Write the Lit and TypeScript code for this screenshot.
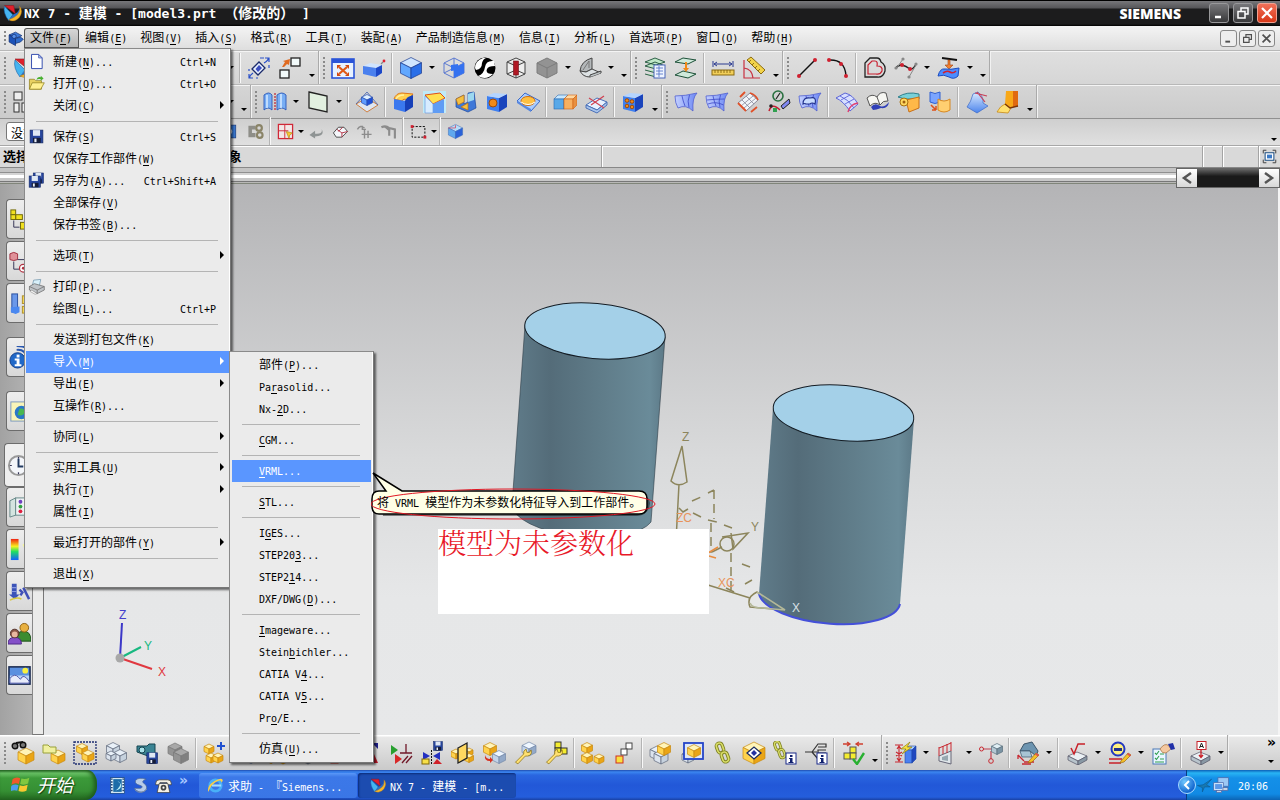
import { LitElement, html, css, nothing } from "lit";
import { customElement } from "lit/decorators.js";
import { unsafeSVG } from "lit/directives/unsafe-svg.js";

/* ---------- small drawing helpers (24 x 24 grid) ---------- */
const p = (d: string, fill = "none", stroke = "none", w = 1, extra = "") =>
  `<path d="${d}" fill="${fill}" stroke="${stroke}" stroke-width="${w}" ${extra}/>`;
const c = (x: number, y: number, r: number, fill = "none", stroke = "none", w = 1) =>
  `<circle cx="${x}" cy="${y}" r="${r}" fill="${fill}" stroke="${stroke}" stroke-width="${w}"/>`;
const r = (x: number, y: number, w: number, h: number, fill = "none", stroke = "none", sw = 1) =>
  `<rect x="${x}" y="${y}" width="${w}" height="${h}" fill="${fill}" stroke="${stroke}" stroke-width="${sw}"/>`;

const BLUE = ["#dff0ff", "#5e9bff", "#1e4fd6", "#2a4fb0"];
const GOLD = ["#fff4b8", "#ffd34d", "#eaa516", "#c98a10"];
const PALE = ["#eef6ff", "#c3d4ea", "#93a9c8", "#7488a8"];
const GREY = ["#a8a8a8", "#949494", "#808080", "#787878"];
const GLASS = ["#e8f0f8", "#dce4ee", "#c6d2de", "#5b6678"];

const iso = (x: number, y: number, s: number, k: string[]) => {
  const h = s / 2;
  return (
    p(`M${x} ${y - s}L${x + s} ${y - h}L${x} ${y}L${x - s} ${y - h}Z`, k[0], k[3], 0.7) +
    p(`M${x - s} ${y - h}L${x} ${y}V${y + s}L${x - s} ${y + h}Z`, k[1], k[3], 0.7) +
    p(`M${x + s} ${y - h}L${x} ${y}V${y + s}L${x + s} ${y + h}Z`, k[2], k[3], 0.7)
  );
};
const box = (x: number, y: number, w: number, h: number, d: number, k: string[]) =>
  p(`M${x} ${y}l${d} ${-d}h${w}l${-d} ${d}Z`, k[0], k[3], 0.6) +
  r(x, y, w, h, k[1], k[3], 0.6) +
  p(`M${x + w} ${y}l${d} ${-d}v${h}l${-d} ${d}Z`, k[2], k[3], 0.6);
const slab = (y: number, k: string[]) =>
  p(`M3 ${y}L12 ${y - 4}L22 ${y}L13 ${y + 5}Z`, k[0], k[3], 0.7) +
  p(`M3 ${y}L13 ${y + 5}V${y + 9}L3 ${y + 4}Z`, k[1], k[3], 0.7) +
  p(`M22 ${y}L13 ${y + 5}V${y + 9}L22 ${y + 4}Z`, k[2], k[3], 0.7);
const sheet = (grid: boolean) =>
  p("M1 6Q11 6 23 3Q18 8 19 21Q12 14 4 18Q1 13 1 6Z", "url(#sheet)", "#5060d0", 0.8) +
  p("M8 6Q9 11 11 16M15.500 5Q13 11 15 17.500", "none", "#3b48c8", 0.8) +
  (grid ? p("M2 10Q11 9 19.500 9M3 14Q11 11 18.500 15", "none", "#3b48c8", 0.8) : "");
const pencil = p("M13 20L20 12L23 14L16 21L12 22Z", "#f5c028", "#9a6a10", 0.7) + p("M20 12L23 14L22 15.500L19 13.500Z", "#e05050");
const wrench =
  p("M3 21L13 11Q12 7 16 5L17 9L20 9L22 6Q24 12 18 13.500L15 13.500L6 23Z", "#ffe070", "#8a7010", 0.9);
const info = (x: number, y: number) =>
  r(x, y, 10, 11, "#fff", "#1a2a8a", 1) + r(x + 4, y + 2, 2.5, 2, "#10206e") + p(`M${x + 3} ${y + 5}h3.500v4h1v1h-5v-1h1.500v-3h-1z`, "#10206e");
const ring = (x: number, y: number) =>
  `<g transform="rotate(-20 ${x} ${y})"><rect x="${x - 3}" y="${y - 5}" width="6" height="10" rx="3" fill="none" stroke="#7d8020" stroke-width="3.400"/><rect x="${x - 3}" y="${y - 5}" width="6" height="10" rx="3" fill="none" stroke="#d8dc68" stroke-width="1.600"/></g>`;
const link = ring(9, 7) + ring(14, 16);
const floppy =
  r(3, 3, 18, 18, "#27459c", "#152a68") + r(7, 3, 10, 8, "#dfe8f4") + r(7, 14, 11, 7, "#141c38") + r(9, 15, 3, 5, "#e8eef8");

const ICONS: Record<string, string> = {
  nx:
    p("M3 3L14 3L16 13Z", "#e0202c", "#8c1018", 0.6) +
    p("M3 4L13 14L8 21Q1 12 3 4Z", "#45b4f0", "#1760a8", 0.6) +
    p("M13 14Q20 12 21 6Q25 17 8 21Z", "#2e6fc4") +
    p("M21 4Q24 15 8 20Q15 24 21 17Q26 9 21 4Z", "#f6b62a", "#b87810", 0.5),
  part:
    p("M3 7L12 3L21 8L14 11Z", "#3f7ad8", "#0e2c70") +
    p("M3 7V17L12 22V12Z", "#1c52b8", "#0e2c70") +
    p("M12 12L19 10L23 13L19 17L12 19Z", "#2f6ccc", "#0e2c70") + c(10, 9, 3, "#5a90e8", "#0e2c70"),
  grid4: r(2, 2, 8, 8, "#eee", "#333") + r(2, 13, 5, 9, "#eee", "#333") + r(10, 13, 8, 9, "#eee", "#333") + r(14, 2, 7, 8, "#eee", "#333"),
  rotate:
    p("M5 13L12 6L18 12L11 19Z", "#e8f0ff", "#1a2a6a", 1.3) + p("M8.500 13L12 9L15 12L11 16Z", "#3c4fc0") +
    p("M18 2H22V6M21 2Q22 4 17 7M13 2L17 2M22 9V12", "none", "#2a50c8", 1.2) + p("M6 22H2V18M3 22Q2 20 6 17M2 13V15M9 22h2", "none", "#2a50c8", 1.2),
  replace: r(13, 2, 9, 8, "#f2fafa", "#222", 1.3) + r(2, 14, 9, 8, "#f2fafa", "#222", 1.3) + p("M4 11L7 6L5 5L12 3L11 9L9 8L6 11Z", "#e06a20"),
  fit:
    r(1, 3, 22, 19, "#e8f2ff", "#2a54d8", 1.6) + r(1, 3, 22, 4, "#2a54d8") +
    p("M8 11L16 18M16 11L8 18", "none", "#e05a18", 2.2) + p("M6 9h4l-4 4zM18 9v4l-4-4zM6 20v-4l4 4zM18 20h-4l4-4z", "#d24a10"),
  view: p("M1 10L8 7L20 9L14 12Z", "#cfe4ff") + p("M1 10L14 12V21L1 18Z", "#4a80ee") + p("M14 12L20 9V17L14 21Z", "#1c48c8") + p("M19 8l2-2", "none", "#888", 1.2) + c(22, 5, 1.4, "#e02030"),
  cube: iso(12, 12, 10.5, ["#cfe6ff", "#62a8ff", "#2a6fe8", "#1b3a8c"]),
  cubeEdge: p("M2 7L12 2L22 7V17L12 22L2 17ZM2 7L12 12L22 7M12 12V22M12 2V12L2 17", "none", "#5b78d0", 1) + p("M12 12L22 7V17L12 22Z", "#3572f0") + p("M9 9L16 8V14L9 15Z", "#3572f0"),
  half:
    c(12, 12, 10.5, "#000") + p("M21 5Q13 4 12 11Q11 18 5 20Q13 25 20 18Q12 18 14 13Q15 10 22 10Z", "#fff") + p("M3 14Q9 13 9 7Q10 3 13 2L10 2Q2 5 2 12Z", "#fff"),
  redCore: p("M3 6L12 2L21 6V18L12 22L3 18ZM3 6L12 10L21 6M12 10V22M3 18L12 14L21 18", "#eee", "#444", 1) + r(9.5, 5, 5, 14, "#b01824", "#701018", 0.6),
  greyCube: p("M2 7L12 2L22 7V17L12 22L2 17Z", "#939393", "#7c7c7c") + p("M2 7L12 12L22 7M12 12V22", "none", "#7c7c7c"),
  section: p("M2 15Q3 5 14 2V13L8 16Z", "#b4b8ba", "#444") + p("M8 16L14 13L23 17L12 21Q5 21 2 15Z", "#dde2e4", "#444") + p("M12 21V19L23 15V17", "#c0c6c8", "#444") + p("M5 14L11 5V12", "none", "#777"),
  layers:
    p("M2 6L12 2L22 6L13 9ZM2 10L12 6L22 10L13 13ZM2 14L13 17L22 14M2 18L13 21L20 18", "#bfe8c8", "#1c5038", 0.9) +
    r(11, 9, 11, 13, "#eef4ff", "#4a66b8") + p("M13 12h7M13 15h7M13 18h7M16 10v11", "none", "#5a78c8", 0.9),
  layer2: p("M1 6L9 2L22 4L14 8ZM1 19L9 15L22 18L14 22Z", "#cfeadb", "#1c5038") + p("M11 6h2v6h2l-3 4l-3-4h2z", "#f08a18"),
  ruler: p("M2 5V11M22 5V11M3 8H21M6 6L3 8L6 10M18 6L21 8L18 10", "none", "#2a3a90", 1) + r(1, 14, 22, 5, "#f2cf5a", "#8a6a10") + p("M4 14v3M7 14v3M10 14v3M13 14v3M16 14v3M19 14v3", "none", "#7a5a08", 0.8),
  angle: p("M2 4V22H18M2 12Q10 13 11 22", "none", "#c83040", 1.2) + p("M5 4L9 1L23 14L19 18Z", "#f2d34a", "#8a6a10") + p("M9 4l-2 2M12 7l-2 2M15 10l-2 2M18 13l-2 2", "none", "#7a5a08", 0.8),
  line: p("M4 20L20 4", "none", "#111", 1.4) + c(4, 20, 2, "#d02030") + c(20, 4, 2, "#d02030"),
  arc: p("M3 4Q19 3 20 20", "none", "#111", 1.4) + c(3, 4, 2, "#d02030") + c(15, 8, 2, "#d02030") + c(20, 20, 2, "#d02030"),
  offset:
    p("M2 21V7L7 2H14Q17 2 18 6Q23 9 22 15Q20 22 14 21Z", "none", "#222", 1.3) + p("M5 18V9L9 5H12Q15 5 14 10Q20 10 19 15Q17 19 13 18Z", "none", "#c82030", 1.2),
  spline: p("M2 12Q4 9 8 9Q12 10 16 13Q19 14 22 8", "none", "#222", 1.3) + p("M9 3L2 13M22 9L15 21", "none", "#888", 1) + c(8, 9, 2, "#d02030") + c(16, 13, 2, "#d02030") + c(9, 3, 1.6, "#888") + c(22, 8, 1.6, "#888") + c(2, 12, 1.6, "#888") + c(15, 21, 1.6, "#888"),
  project: p("M5 2L20 4", "none", "#111", 2) + p("M11 4h2v5h3l-4 4l-4-4h3z", "#f08030", "#a04010", 0.6) + p("M1 20Q3 12 8 13T22 12L21 20Q17 24 12 21T1 20Z", "#4b8cff", "#1c4cc0") + p("M6 17Q10 14 13 16T19 15", "none", "#d02030", 1.6),
  sketch: p("M1 5Q6 1 9 5V20Q5 16 1 20ZM14 5Q19 1 23 5V20Q19 16 14 20Z", "#78aef4", "#2a58b8", 0.9) + p("M12 3V21", "none", "#c02030", 1.2, 'stroke-dasharray="2 1"') + p("M4 5V18M18 4V18", "none", "#d8ecff", 1.5),
  datum: p("M3 2L21 6V22L3 18Z", "#e2f0e0", "#222", 1.3),
  extrude: p("M1 14L12 8L23 15L12 22Z", "#dfe6f0", "#d08040", 1) + p("M12 2L1 14M12 2L23 15", "none", "#4060b0", 0.8) + iso(12, 10, 5.500, BLUE),
  blend: p("M2 9Q4 3 10 3L21 4L16 10Q11 8 10 11Z", "#ffd050", "#e07818") + p("M2 9L13 11V22L2 19Z", "#3a78ee") + p("M13 11Q14 7 21 5V17L13 22Z", "#1740b8") + p("M4 9Q6 5 12 5", "none", "#fff0a0", 1.3),
  chamfer: r(0, 1, 23, 22, "#bfeaf8") + p("M2 5L17 3L22 8L10 14Z", "#ffe050", "#e05018") + p("M2 6L10 14V23H2Z", "#d8ecff", "#6a9ce0", 0.7) + p("M10 14L21 9V23H10Z", "#5f9cf4"),
  shell: p("M2 9L10 5V14L14 12V3L20 2L22 18L14 22L2 17Z", "#3f78d8", "#1a48a0", 0.7) + p("M2 9L10 5V12L4 15ZM7 17L14 13V20Z", "#f5c040", "#c07010", 0.7) + p("M14 4L20 2V10L14 12Z", "#9cd8f0"),
  hole: p("M2 6L14 8V22L2 19Z", "#3f80f0") + p("M14 8L22 4V17L14 22Z", "#1a44bc") + p("M2 6L9 3L22 4L14 8Z", "#b4d4ff") + c(8, 13, 4, "#f08a18", "#a04a08"),
  boss: p("M1 11L9 3L24 11L15 21Z", "#a8ccff", "#3a68c8") + p("M1 11L15 19V22L1 13Z", "#5888e0") + `<ellipse cx="12" cy="11" rx="7" ry="4.500" fill="#ffc040" stroke="#d07010"/>` + p("M5 12Q12 17 19 12", "none", "#fff", 1),
  trim: box(1, 9, 10, 10, 4, ["#c8e8ff", "#58a8e8", "#3a78c8", "#2a68b0"]) + box(11, 9, 9, 10, 4, ["#ffd8a0", "#f8b060", "#e89040", "#d06010"]),
  cut: p("M2 15L13 8L23 12L13 20Z", "#e8f2ff", "#4a70b8") + p("M2 15V18L13 23L23 15V12L13 20Z", "#a8c4ec", "#4a70b8") + p("M5 8L20 18", "none", "#d04050", 1.2) + p("M20 6L7 15", "none", "#d04050", 1.2),
  pattern: p("M2 6L14 8V22L2 19Z", "#3f80f0") + p("M14 8L22 4V17L14 22Z", "#1a44bc") + p("M2 6L9 3L22 4L14 8Z", "#b4d4ff") + c(6, 10.5, 1.8, "#f08a18", "#a04a08") + c(11, 11.500, 1.8, "#f08a18", "#a04a08") + c(6, 16, 1.8, "#f08a18", "#a04a08") + c(11, 17, 1.8, "#f08a18", "#a04a08"),
  sheetA: sheet(false),
  sheetB: sheet(true),
  sheetRed: p("M2 13L14 3L22 10L10 21Z", "#f2f6fa", "#889") + p("M6 10l8 8M10 6l8 8M5 16L17 6M8 18L20 8", "none", "#889", 0.8) + p("M2 13Q6 17 10 21M14 3Q20 5 22 10M4 7L9 2M15 22L21 17", "none", "#e05028", 1.8),
  sweep: c(11, 6, 5, "none", "#2a7040", 1.6) + p("M13 3L9 9", "none", "#222", 1.2) + p("M2 21Q5 12 13 20", "none", "#c02030", 1.5) + p("M14 16L22 9L23 13L16 19Z", "#8088f0", "#222") + r(6, 18, 4, 4, "#30a050") + c(4, 16, 1.8, "#222"),
  sheetC: sheet(false) + p("M5 14Q5 7 12 8Q19 6 17 14Q14 12 12 14L8 14Q7 13 5 14Z", "#c8dcff", "#20308c", 1.1),
  mesh: p("M1 8L10 3Q18 5 23 14L15 21Q8 11 1 8Z", "#d8e0ff", "#5b64d8") + p("M5 6Q13 9 19 18M6 10L15 5M10 14L19 9M4 8", "none", "#5b64d8", 0.9) + p("M13 22Q15 14 23 13", "none", "#e04070", 1.4),
  book: p("M1 8Q6 3 11 7Q14 1 20 3L22 11Q17 10 14 15Q9 11 4 16Z", "#f6f6f2", "#555") + p("M11 7L14 15", "none", "#555") + p("M5 17Q9 12 14 16Q18 18 23 12Q22 19 15 18Q10 20 7 20Z", "#3040b8"),
  roll: p("M1 7Q10 1 22 4V9L8 9Z", "#78d0d8", "#30808c") + p("M9 10L22 7V18L12 22Z", "#ffb848", "#c87018") + c(7, 12, 4, "#ffd860", "#a87010") + c(7, 12, 1.5, "#a06010"),
  transform: p("M2 2Q7 5 12 2V12Q7 15 2 12Z", "#7aa4ff", "#3060d0") + p("M10 9Q16 13 22 9V20Q16 24 10 20Z", "#ffcf70", "#d88820") + p("M3 15L8 20M8 20V16M8 20H4", "none", "#e05018", 1.5),
  blueFin: p("M2 17Q6 12 8 4L13 2Q19 7 18 13L23 16L12 23Z", "url(#fin)", "#3a68c8", 0.7) + p("M10 3L22 6M12 2L20 12", "none", "#c84058", 1.2),
  orange: p("M10 1H22V16L14 18L9 14Z", "#f8a818") + p("M17 1H22V16L17 17Z", "#e06a10") + p("M1 22Q4 16 9 14L15 18L12 23Z", "#ffe070", "#c88a18", 0.8) + p("M9 14L14 18L22 16", "none", "#7a3408", 1.3),
  lock: r(2, 3, 16, 18, "#3a78d0", "#1a3c80") + c(9, 12, 4, "#e8f0ff"),
  asm: p("M2 4V20H12V14H7V9H12V4Z", "#8e8e88") + c(17, 7, 4, "none", "#8a8468", 3) + c(18, 17, 4, "none", "#8a8468", 3),
  snap: r(2, 2, 20, 20, "#f2e8e8", "#d02838", 1.8) + p("M2 11H16M11 2V22", "none", "#d02838", 1.3) + p("M13 12L22 14L18 17L17 22Z", "#f8c830", "#a07810", 0.8),
  undo: p("M19 8Q22 16 10 15V11L2 17L10 22V19Q25 18 19 8Z", "#8f9494"),
  wcs: p("M2 14L9 6H17L22 12L14 20H6Z", "#f4f6fa", "#444", 1.3) + p("M7 9L14 14V20M14 14L22 12M9 12L15 6", "none", "#b03040", 1.3),
  ghostA: p("M2 9Q6 2 12 7M12 10V22M8 16H22M17 11V21M9 4v5h5", "none", "#8c8c8c", 2),
  ghostB: p("M2 6Q8 3 13 7L21 9V22M13 10V18M7 5l7 6", "none", "#8c8c8c", 3),
  rect: p("M3 5H21V20H3Z", "none", "#111", 1.4, 'stroke-dasharray="3 2"') + r(1, 3, 4, 4, "#d02030") + r(19, 18, 4, 4, "#d02030"),
  blueBox: iso(12, 12, 10, ["#b8dcf8", "#5fa8ee", "#2b62d8", "#3a68b8"]) + p("M2 7h10v-4", "none", "#d04860", 1.1),
  full: p("M2 7V2H7M17 2H22V7M22 17V22H17M7 22H2V17", "none", "#444", 1.600) + r(5, 6, 14, 12, "#fff", "#1a4c80", 1.6) + r(8, 9, 8, 6, "#3a7ac8"),
  newFile: p("M5 2H15L20 7V22H5Z", "#fff", "#3850b0", 1.4) + p("M15 2V7H20Z", "#b8c8f0", "#3850b0"),
  open: p("M2 6H9L11 8H19V20H2Z", "#e8d060", "#8a7a18") + p("M2 20L6 11H23L18 20Z", "#fff090", "#8a7a18") + p("M12 7Q13 2 18 3V1L22 5L18 8V6Q14 5 12 7Z", "#48b030"),
  save: floppy,
  saveAs: `<g transform="translate(5 -1) scale(.8)">${floppy}</g><g transform="translate(-1 3) scale(.88)">${floppy}</g>`,
  print: p("M8 3L18 2L16 11H6Z", "#d8f0fa", "#6a90a8") + p("M2 12L9 8L23 12V17L13 22L2 17Z", "#c0c4c8", "#666") + p("M2 12L13 17L23 12M13 17V22", "none", "#666") + p("M3 19l7 4l3-1l-8-5z", "#f8f8f8", "#777", 0.7),
  find: iso(15, 15, 8, GOLD) + c(4, 5, 2.800, "#777", "#111", 1.4) + c(12, 4, 2.800, "#777", "#111", 1.4) + p("M5 2L12 1", "none", "#111", 2),
  openComp: iso(16, 16, 7, GOLD) + p("M1 4H6L8 6H14V12H1Z", "#f0f0a0", "#98a038"),
  selComp: p("M1 1H23V23H1Z", "none", "#1c2c70", 1.3, 'stroke-dasharray="2 1"') + iso(9, 8, 5.5, GOLD) + iso(15, 15, 6, GOLD),
  wire: iso(9, 8, 6.5, GLASS) + iso(16, 15, 6.5, GLASS) + iso(7, 15, 5, GLASS),
  camera: p("M2 5H12L14 3H20V12L13 15L2 11Z", "#3a8494", "#144450") + c(7, 9, 3, "#a8e0e8", "#144450") + `<g transform="translate(10 10) scale(.6)">${floppy}</g>`,
  ghost: iso(9, 9, 7, GREY) + iso(15, 15, 7.5, GREY),
  addComp: iso(6, 8, 5, GOLD) + iso(8, 17, 5, GOLD) + iso(15, 17, 5, GOLD) + p("M18 1V9M14 5H22", "none", "#2050d0", 2),
  corner: p("M3 22L20 22L12 4Z", "#c01828") + p("M14 2L20 8V2Z", "#20208c"),
  mate: p("M2 4L9 9L2 14Z", "#28a030") + p("M6 13L13 18L6 23Z", "#d82828") + p("M17 3V12M11 12H23M13 22L19 15M17 22L23 15", "none", "#701828", 1.3),
  mirror: p("M3 11L10 15L3 19ZM20 11L13 15L20 19Z", "#2430c0") + p("M11.500 9V23", "none", "#111", 1, 'stroke-dasharray="2 1"') + r(2, 18, 7, 5, "#f8e048", "#806808") + p("M13 23h9l-5-5z", "#d02028") + `<g transform="translate(12 -1) scale(.5)">${floppy}</g>`,
  mirrorAsm: iso(5, 13, 5, GOLD) + iso(18, 11, 4, GOLD) + iso(18, 17, 4.500, GOLD) + p("M7 7L16 2V17L7 22Z", "#ffd860", "#222", 1.3),
  move: iso(8, 8, 6.5, GOLD) + iso(17, 16, 6.500, PALE) + p("M3 14Q4 18 8 18V16L11 19L8 22V20Q2 20 3 14Z", "#d83020"),
  wrenchA: iso(16, 8, 7, PALE) + `<g transform="translate(0 4) scale(.82)">${wrench}</g>`,
  wrenchB: r(11, 1, 6, 6, "#f4ec30", "#333") + r(11, 7, 6, 6, "#f4ec30", "#333") + r(17, 7, 6, 6, "#f4ec30", "#333") + `<g transform="translate(0 4) scale(.82)">${wrench}</g>`,
  explode: iso(6, 7, 5.5, GOLD) + iso(6, 17, 5.5, GOLD) + iso(18, 18, 5, GOLD),
  boxes: r(14, 2, 6, 6, "#fff", "#444") + r(9, 8, 6, 6, "#fff", "#444") + r(4, 15, 7, 7, "#f8e040", "#d03020"),
  wave1: iso(8, 12, 7, GLASS) + iso(12, 16, 7, GLASS) + iso(15, 8, 6.500, GOLD),
  wave2: iso(8, 16, 6, GLASS) + r(4, 2, 19, 16, "#dfe8f4", "#2444c8", 1.8) + iso(14, 10, 6.500, GOLD),
  link,
  diamond: iso(12, 12, 11, GOLD) + p("M5 12L12 6L19 12L12 18Z", "#fff", "#1c2c60", 1.3) + p("M9 12L12 9L15 12L12 15Z", "#2430a0"),
  linkInfo: `<g transform="translate(-3 -1) scale(.85)">${link}</g>` + info(13, 12),
  treeInfo: p("M1 11H8M8 11L14 3H22V6H14M8 11H13M22 9H14V12H22M8 11L14 18", "none", "#333", 1.2) + info(13, 12),
  check: p("M2 3H9M6 1L9 3L6 5M22 3H15M18 1L15 3L18 5", "none", "#d04030", 1.3) + r(9, 6, 6, 6, "#f4ec30", "#555") + r(9, 12, 6, 6, "#f4ec30", "#555") + r(3, 12, 6, 6, "#f4ec30", "#555") + p("M12 18L16 23L23 12", "none", "#28b030", 2.4),
  dimA: p("M2 4H10M2 21H10M6 5V20M4 8L6 5L8 8M4 17L6 20L8 17M3 11L9 15M9 11L3 15", "none", "#c82830", 1.1) + box(12, 9, 7, 13, 4, ["#a8ccff", "#4a80f0", "#2048c0", "#2048a8"]) + p("M17 1L8 8H13L9 13L19 6H14Z", "#f4e040", "#908010", 0.7),
  dimB: p("M3 15L15 10V23L3 20Z", "#e0e6ea", "#667") + p("M3 15V6M7 13V5M11 12V3M15 10V1M3 7L15 2", "none", "#c82830", 1) + p("M6 16L12 14V20L6 19Z", "#98a8b0"),
  dimC: p("M4 8H14M12 10V18", "none", "#c04050", 1.2) + c(2.5, 8, 2, "none", "#c82830") + c(12, 20, 2.300, "none", "#c82830") + iso(18, 8, 5.500, ["#e0eef4", "#b4c8d4", "#7a94a4", "#566c7a"]),
  sketchEdit: p("M4 10L8 3L16 1L22 10L20 15L14 10Z", "#6c94b0", "#3c5468") + p("M4 10L14 10L16 16H6Z", "#a8c4d4", "#3c5468", 0.7) + p("M2 14L8 20M2 14V18M8 21H18M6 23H15", "none", "#c82830", 1.3) + pencil,
  finish: slab(15, ["#eaf0f4", "#b8c4cc", "#8898a4", "#556"]) + p("M6 7L9 13L13 3H20", "none", "#c82028", 1.5),
  symbol: c(10, 8, 6.500, "#fff080", "#2438c0", 2) + r(6, 7, 8, 3, "#20308c") + p("M1 18H14M1 22H13", "none", "#c82028", 1.6) + pencil,
  notes: r(2, 8, 13, 15, "#eaf6ff", "#4a78b8") + p("M4 12l1.500 1.500L8 10M4 17l1.500 1.500L8 15M9 13h4M9 18h4M4 21h9", "none", "#30a050", 1.1) + p("M9 8Q14 1 18 5L20 8L15 12Q11 13 9 8Z", "#f4c8a0", "#a07040", 0.7) + p("M17 3L22 2L24 8L20 9Z", "#2030a8"),
  tagA: slab(15, ["#eaf0f4", "#b8c4cc", "#8898a4", "#556"]) + r(9, 0.5, 9, 8, "#fff", "#c82028", 1) + p("M11.500 7L13.500 2L15.500 7M12 5.500H15", "none", "#222", 1) + p("M13 9V16M11 14L13 16.500L15 14", "none", "#c82028", 1.3),
  /* resource bar */
  navA: r(3, 2, 5, 5, "#f0e020", "#706808") + r(8, 7, 7, 5, "#f0e020", "#706808") + r(3, 7, 5, 5, "#f0e020", "#706808") + r(13, 15, 7, 7, "#f0e020", "#706808") + p("M6 13V20H12", "none", "#335"),
  navB: p("M2 4Q6 1 10 4V10Q6 12 2 10Z", "#e09098", "#a03040") + p("M10 10H22M6 12V20H12", "none", "#335") + c(16, 19, 4, "#fff", "#b03040", 1.3) + c(16, 19, 1.5, "#b03040"),
  navC: r(4, 2, 6, 19, "#6a98ea", "#2a50a0") + p("M3 16L12 15V21L8 23L3 21Z", "#4a88f0") + r(15, 4, 8, 8, "#f4d858", "#b09028") + r(15, 15, 8, 7, "#f4d858", "#b09028"),
  navInfo: c(10, 15, 8, "#2068c8", "#103c88") + r(9, 9, 3, 3, "#fff") + p("M7 13h5v6h2v2H7v-2h2v-4H7z", "#fff") + p("M9 4Q18 3 20 13M9 0Q23 0 24 11", "none", "#2a58b0", 2),
  navWeb: r(3, 2, 18, 20, "#f8f4b8", "#7a98c0") + c(14, 13, 7, "#2a78c8") + p("M12 9Q17 8 18 13Q14 18 10 15Z", "#48b850"),
  navClock: c(12, 12, 10, "#f4f6fa", "#999", 2) + p("M12 5V13H17", "none", "#223a60", 2) + p("M12 3v2M12 19v2M3 12h2M19 12h2", "none", "#335", 1.3),
  navRoles: p("M2 5L8 2V20L2 22Z", "#d4e4e0", "#688") + r(8, 2, 14, 18, "#eef2f4", "#688") + c(13, 6, 2, "#7040c0") + c(13, 11, 2, "#30a040") + c(13, 16, 2, "#e02040"),
  navColor: r(3, 1, 8, 22, "url(#rainbow)") + p("M15 7L22 2V20Z", "#f4f4a0"),
  navTool: p("M4 4H9V15H12L7 20L1 15H4Z", "#3c54b8") + p("M4 8h5M4 12h5", "none", "#8898e0", 1.300) + p("M12 10L15 13L13 16M16 8L22 20", "none", "#4050b8", 2.600) + p("M2 21Q10 17 14 20", "none", "#d8c840", 1.500),
  navPeople: p("M9 20Q8 9 16 10Q24 9 24 20Z", "#3c8c30", "#1c5018") + c(17, 6, 4.500, "#e8b040", "#906010") + p("M0 23Q0 16 7 16Q14 16 14 23Z", "#8450c8", "#4c2888") + c(7, 12, 4.500, "#8c5848", "#503028") + c(7, 13, 3, "#e8b8a0"),
  navPicture: r(1, 3, 22, 18, "#5a90e0", "#1c2c50", 1.6) + p("M2 12H22V20H2Z", "#b8d4f8") + c(18, 7, 3, "#f8f040") + p("M2 20V15Q7 9 11 14L13 16Q16 9 22 18V20Z", "#e8ecfa", "#5058a8"),
  /* taskbar */
  flag: p("M2 6Q6 3 11 5L9.500 12Q5 10 .500 13Z", "#f0582c") + p("M12.500 5.500Q17 7 22 4.500L20.500 11.500Q16 14 11 12Z", "#80c840") + p("M.500 14Q5 11.500 9 13.500L7.500 20Q3 18.500 -1 21Z", "#4c9cf0") + p("M10.500 13.500Q15 15.500 20 13L18.500 20Q14 22.500 9 20.500Z", "#f8c830"),
  film: r(2, 1, 20, 22, "#dff2fa", "#0a3a78") + r(6, 3, 12, 18, "#1c6ca8") + p("M12 6Q18 8 15 13T9 19Q18 18 17 10", "#b8ecf8") + p("M4 2v20M20 2v20", "none", "#0a2c60", 2, 'stroke-dasharray="2 2"'),
  swirl: p("M20 3Q8 0 5 5Q3 10 12 12Q17 14 12 16L3 16Q10 24 18 20Q24 14 17 9Q12 6 20 3Z", "#b8cce8", "#486898") + p("M4 18Q12 26 21 17", "none", "#8090a8", 1.400),
  phone: p("M1 9Q1 4 6 4H18Q23 4 23 9V11H17V8H7V11H1Z", "#f4f0e4", "#333") + p("M6 9H18L21 22H3Z", "#f4f0e4", "#333") + c(12, 15, 4, "#444") + c(12, 15, 1.5, "#fff"),
  ie: c(12, 12, 8, "none", "#48b0f8", 4) + p("M7 12H20", "none", "#a0dcff", 3) + p("M2 21Q-1 13 10 6Q20 0 22 4Q23 6 20 8Q21 5 17 5Q6 9 2 21Z", "#f8d048"),
  tray: p("M2 12L10 11L22 3L15 11L20 14L12 14L9 21L9 15Z", "#1878b0", "#0a5890", 0.8),
  pcs: r(7, 1, 15, 12, "#9cc8f4", "#4c68a8") + r(1, 8, 14, 11, "#cfe6fc", "#4c68a8") + r(3, 10, 10, 7, "#5c98e8") + r(5, 19, 7, 3, "#c8d4e4", "#4c68a8") + r(14, 15, 7, 4, "#c8d4e4", "#4c68a8"),
};

const icon = (name: string, cls = "i24") =>
  html`<svg class=${cls} viewBox="0 0 24 24" aria-hidden="true">${unsafeSVG(ICONS[name])}</svg>`;

/* Splits a caption into full-width and half-width runs; "&" marks the mnemonic. */
const label = (s: string) =>
  (s.match(/[\x20-\x7e]+|[^\x20-\x7e]+/g) ?? []).map((run) => {
    if (!/^[\x20-\x7e]/.test(run)) return run;
    const at = run.indexOf("&");
    return at < 0
      ? html`<span class="hw">${run}</span>`
      : html`<span class="hw">${run.slice(0, at)}<u>${run[at + 1]}</u>${run.slice(at + 2)}</span>`;
  });

/* Toolbar strings: icon names, "v" drop arrow, "_" overflow arrow, "|" divider. */
const tool = (t: string) => {
  if (t === "|") return html`<i class="div"></i>`;
  if (t === "v") return html`<button class="drop" aria-label="展开"><i class="tri"></i></button>`;
  if (t === "_") return html`<button class="more" aria-label="工具栏选项"><i class="tri"></i></button>`;
  return html`<button class="tool" aria-label=${t}>${icon(t)}</button>`;
};
const group = (s: string) => html`<div class="group" role="toolbar"><i class="grip"></i>${s.split(" ").map(tool)}</div>`;

const ROW1 = [
  "nx newFile open save wire layers ruler v | rotate replace _",
  "fit view | cube v cubeEdge half redCore greyCube v section v _",
  "layers layer2 | ruler angle _",
  "line arc | offset spline v project v _",
];
const ROW2 = [
  "grid4 asm wire replace layers fit cube v _",
  "sketch v datum v | extrude | blend chamfer shell hole boss | trim cut | pattern _",
  "sheetA sheetB sheetRed sweep sheetC | mesh book roll transform | blueFin orange _",
];
const BOTTOM = [
  "find openComp selComp wire camera ghost | addComp move explode wave1 boxes corner mate mirror mirrorAsm move wrenchA wrenchB | explode boxes | wave1 wave2 link diamond linkInfo treeInfo | check _",
  "dimA v dimB v dimC | sketchEdit v | finish v symbol v notes | tagA v",
];
const MENUS = ["编辑(&E)", "视图(&V)", "插入(&S)", "格式(&R)", "工具(&T)", "装配(&A)", "产品制造信息(&M)", "信息(&I)", "分析(&L)", "首选项(&P)", "窗口(&O)", "帮助(&H)"];

type Item = { t: string; k?: string; i?: string; sub?: boolean; on?: boolean } | null;
const FILE_MENU: Item[] = [
  { t: "新建(&N)...", k: "Ctrl+N", i: "newFile" }, { t: "打开(&O)...", k: "Ctrl+O", i: "open" }, { t: "关闭(&C)", sub: true }, null,
  { t: "保存(&S)", k: "Ctrl+S", i: "save" }, { t: "仅保存工作部件(&W)" }, { t: "另存为(&A)...", k: "Ctrl+Shift+A", i: "saveAs" },
  { t: "全部保存(&V)" }, { t: "保存书签(&B)..." }, null,
  { t: "选项(&T)", sub: true }, null,
  { t: "打印(&P)...", i: "print" }, { t: "绘图(&L)...", k: "Ctrl+P" }, null,
  { t: "发送到打包文件(&K)" }, { t: "导入(&M)", sub: true, on: true }, { t: "导出(&E)", sub: true }, { t: "互操作(&R)..." }, null,
  { t: "协同(&L)", sub: true }, null,
  { t: "实用工具(&U)", sub: true }, { t: "执行(&T)", sub: true }, { t: "属性(&I)" }, null,
  { t: "最近打开的部件(&Y)", sub: true }, null,
  { t: "退出(&X)" },
];
const IMPORT_MENU: Item[] = [
  { t: "部件(&P)..." }, { t: "Pa&rasolid..." }, { t: "Nx-&2D..." }, null,
  { t: "&CGM..." }, null,
  { t: "&VRML...", on: true }, null,
  { t: "&STL..." }, null,
  { t: "I&GES..." }, { t: "STEP20&3..." }, { t: "STEP2&14..." }, { t: "DXF/DWG(&D)..." }, null,
  { t: "&Imageware..." }, { t: "Stein&bichler..." }, { t: "CATIA V&4..." }, { t: "CATIA V&5..." }, { t: "Pr&o/E..." }, null,
  { t: "仿真(&U)..." },
];
const TABS = ["navA", "navB", "navC", "navInfo", "navWeb", "navClock", "navRoles", "navColor", "navTool", "navPeople", "navPicture"];

@customElement("app-root")
export class AppRoot extends LitElement {
  static styles = css`
    :host { display: block; font: 12px/16px "Noto Sans CJK SC", "Liberation Sans", sans-serif; color: #000; }
    * { box-sizing: border-box; }
    button { font: inherit; color: inherit; border: 0; background: none; padding: 0; margin: 0; }
    u { text-decoration: none; border-bottom: 1px solid currentColor; }
    .hw { font-family: "DejaVu Sans Mono", monospace; font-size: 10px; line-height: 12px; white-space: pre; }
    .app { display: flex; flex-direction: column; height: 100vh; min-height: 600px; overflow: hidden; position: relative; background: #e4e4e4; }
    .defs { position: absolute; width: 0; height: 0; }
    .i24 { width: 24px; height: 24px; display: block; }
    .i20 { width: 20px; height: 20px; display: block; }
    .i16 { width: 17px; height: 17px; display: block; }
    .tri { display: block; border: 3px solid transparent; border-top-color: #000; border-bottom: 0; }

    .title { display: flex; align-items: center; height: 26px; flex: none; padding: 0 3px 0 2px; color: #fff; font-weight: bold; font-size: 14px;
      background: linear-gradient(#000 0 1px, #77777a 1px, #555558 8px, #1c1c1d 9px, #1c1c1d 24px, #000); }
    .title .hw { font-size: 13px; line-height: 16px; }
    .title h1 { margin: 0 0 0 2px; font: inherit; flex: 1; white-space: nowrap; }
    .brand { font: 800 14px/16px "Open Sans", "Liberation Sans", sans-serif; margin: 2px 28px 0 0; }
    .wins { display: flex; gap: 4px; }
    .wins button { width: 20px; height: 20px; border: 1px solid #98989a; border-radius: 3px; background: linear-gradient(#77777a, #38383a); display: grid; place-items: center; }
    .wins .x { background: linear-gradient(#f07058, #d83818); border-color: #f0a090; }
    .wins svg, .subwins svg { width: 14px; height: 14px; }

    .menubar { display: flex; align-items: center; height: 24px; flex: none; background: linear-gradient(#f4f4f4, #dedede); padding: 0 5px 0 0; }
    .menubar > .grip { height: 16px; width: 7px; }
    .menubar nav { display: flex; flex: 1; }
    .top { height: 20px; padding: 0 7px 2px 6px; white-space: nowrap; }
    .top.open { background: linear-gradient(#d8d8d8, #b4b4b4); box-shadow: inset 0 0 0 1px #555; border-radius: 3px 3px 0 0; }
    .anchor { position: relative; }
    .subwins { display: flex; gap: 2px; color: #505050; }
    .subwins button { width: 17px; height: 17px; border: 1px solid #888; border-radius: 3px; background: #eee; display: grid; place-items: center; }
    .subwins svg { width: 11px; height: 11px; }

    .menu { position: absolute; z-index: 5; margin: 0; padding: 2px 1px; list-style: none; background: #ebebeb; border: 1px solid #8a8a8a;
      border-right-color: #777; border-bottom-color: #777; box-shadow: 2px 2px 2px rgba(0,0,0,.55), inset -1px 0 #fff; }
    .menu.file { left: 0; top: 20px; width: 207px; }
    .menu.import { left: 100%; top: 0; width: 145px; padding: 2px; }
    .menu li { position: relative; }
    .menu li.on > .item { background: #5a96ff; color: #fff; }
    .item { display: flex; align-items: center; width: 100%; height: 22px; text-align: left; white-space: nowrap; padding: 0 0 2px 2px; }
    .item .ic { width: 25px; flex: none; padding-top: 1px; }
    .item .t { flex: 1; }
    .item .ar { width: 13px; display: flex; justify-content: flex-end; padding-right: 5px; }
    .ar i { border: 4px solid transparent; border-left-color: currentColor; border-right: 0; }
    .menu .line { height: 1px; margin: 4px 11px 4px 10px; background: #b4b4b4; }

    .bars { flex: none; background: linear-gradient(#e0e0e0, #cbcbcb); border-bottom: 1px solid #909090; }
    .row { display: flex; height: 34px; overflow: hidden; border-top: 1px solid #b8b8b8; box-shadow: inset 0 1px #f4f4f4; }
    .group { display: flex; align-items: center; flex: none; border-right: 1px solid #aaa; box-shadow: 1px 0 #f2f2f2; }
    .grip { width: 8px; height: 24px; flex: none; background: radial-gradient(circle, #8a8a8a 0 1px, transparent 1px) 3px 0 / 4px 4px repeat-y; }
    .tool { width: 31px; height: 28px; flex: none; display: grid; place-items: center; }
    .drop { width: 12px; height: 20px; flex: none; display: grid; place-items: center; }
    .more { width: 13px; height: 28px; flex: none; display: grid; place-items: end center; padding-bottom: 5px; }
    .div { width: 2px; margin: 0 2px; height: 30px; flex: none; border-left: 1px solid #b4b4b4; border-right: 1px solid #f8f8f8; }

    .select { display: flex; align-items: center; height: 26px; flex: none; background: linear-gradient(#cfcfcf, #e0e0e0); padding: 0 6px 1px; }
    .select select { width: 160px; height: 19px; margin-right: 53px; border: 1px solid #777; border-radius: 3px; background: #fff; font: inherit; line-height: 16px; padding: 0; }
    .select .tool { width: 24px; }
    .select .drop { width: 7px; }
    .select .more { margin-left: auto; margin-right: -6px; height: 24px; padding-bottom: 3px; }

    .cue { display: flex; height: 23px; flex: none; align-items: center; background: #d9d9d9; border-top: 1px solid #a8a8a8; border-bottom: 1px solid #888; box-shadow: inset 0 1px #fff; }
    .cue strong { font-size: 13px; flex: 600 1 0; padding: 0 0 2px 3px; white-space: nowrap; }
    .cue span { align-self: stretch; border-left: 1px solid #a4a4a4; box-shadow: inset 1px 0 #fff; }
    .cue .wide { flex: 602 1 0; } .cue .n1 { width: 20px; } .cue .n2 { width: 36px; }
    .cue .n3 { width: 22px; display: grid; place-items: center; }
    .cue .i16 { width: 15px; height: 15px; }
    .split { height: 16px; flex: none; position: relative; background: linear-gradient(#c4c4c4 0 4px, #909090 4px 5px, #d4d4d4 5px 7px, #fff 7px 10px, #c8c8c8 10px 13px, #777 13px 14px, #b8b8b6 14px 15px, #80857a 15px); }
    .pager { position: absolute; right: 0; top: 0; z-index: 2; display: flex; height: 20px; width: 104px; border: 1px solid #666; background: linear-gradient(#666, #1a1a1a 40%); }
    .pager button { width: 20px; background: linear-gradient(#fff, #d8d8d8); display: grid; place-items: center; }
    .pager i { flex: 1; } .pager svg { width: 12px; height: 14px; }

    .main { display: flex; flex: 1; min-height: 0; }
    .res { width: 32px; flex: none; display: flex; flex-direction: column; gap: 2px; align-items: flex-end; padding-top: 15px; background: linear-gradient(90deg, #a2a2a2, #b4b4b4); }
    .res button { width: 26px; height: 40px; flex: none; border: 1px solid #6c6c6c; border-right: 0; border-radius: 4px 0 0 4px; background: linear-gradient(#eee, #d8d8d8); display: grid; place-items: center; }
    .res svg { width: 23px; height: 23px; }
    .res .gap { margin-top: 12px; }
    .res .cur { width: 28px; height: 44px; margin-top: 10px; margin-bottom: -2px; background: #eee; }
    .edge { width: 12px; flex: none; background: #ebebea; border-left: 1px solid #888; border-right: 1px solid #777; border-bottom: 1px solid #777; }
    .canvas { flex: 1; position: relative; overflow: hidden; background: linear-gradient(#b4b4b6, #d9dadb 50%, #e6e7e8 75%, #e7e8e9); border-right: 2px solid #f4f4f4; }
    .canvas > svg { display: block; width: 100%; height: 100%; font: 12px/14px "Liberation Sans", sans-serif; }
    .memo { position: absolute; left: 394px; top: 345px; width: 271px; height: 85px; margin: 0; background: #fff; color: #e81828; font-family: "Noto Serif CJK SC", "Noto Sans CJK SC", serif; font-size: 28px; font-weight: 300; line-height: 26px; white-space: nowrap; }

    .tip { position: absolute; left: 100%; top: 10px; width: 288px; height: 52px; }
    .tip svg { position: absolute; inset: 0; width: 100%; height: 100%; }
    .tip p { position: absolute; left: 6px; top: 24px; margin: 0; white-space: nowrap; color: #000; }

    .bottom { display: flex; height: 35px; flex: none; background: linear-gradient(#fff 0 1px, #e8e8e8 2px, #cacaca); overflow: hidden; padding-right: 4px; }
    .bottom .group:last-of-type { border: 0; box-shadow: none; }
    .bottom .grip { width: 7px; }
    .tail { margin-left: auto; display: flex; flex-direction: column; align-items: center; justify-content: space-between; padding: 1px 0 7px; font: bold 14px/12px "DejaVu Sans", sans-serif; }

    .task { display: flex; align-items: stretch; height: 30px; flex: none; color: #fff; background: linear-gradient(#1f4cb0, #3b86f0 2px, #2a66e0 5px, #2258d8 50%, #245edc 90%, #1941a5); }
    .start { width: 97px; display: flex; align-items: center; gap: 6px; padding: 0 0 2px 11px; font-size: 18px; font-style: italic; line-height: 24px; text-shadow: 1px 1px 1px #143c10;
      background: linear-gradient(#2a6c28, #6cc468 3px, #3c9a3a 8px, #358f33 70%, #246820); border-radius: 0 10px 12px 0 / 0 14px 14px 0; box-shadow: inset -3px 0 4px #1d5a1c; }
    .quick { display: flex; align-items: center; gap: 6px; width: 102px; padding-left: 12px; }
    .quick b { font: bold 14px/12px "DejaVu Sans", sans-serif; margin: -10px 0 0 1px; color: #a8c8ff; }
    .win { width: 158px; margin: 3px 1px 2px 0; display: flex; align-items: center; gap: 4px; padding-left: 8px; white-space: nowrap; border-radius: 3px; background: linear-gradient(#5a98f8, #3c78e8 4px, #3a76e6); }
    .win.act { background: #1c4cb0; box-shadow: inset 1px 1px 2px #0c2c78; padding-left: 11px; }
    .tray { margin-left: auto; width: 94px; display: flex; align-items: center; background: linear-gradient(#0c60b8, #28b4f4 3px, #1490e8 8px, #118ae4 80%, #0c64b4); border-left: 1px solid #0a3c80; }
    .tray button { width: 18px; height: 18px; flex: none; margin-left: -9px; border-radius: 50%; background: radial-gradient(circle at 35% 30%, #70c8ff, #1468d0 70%); border: 1px solid #a8dcff; display: grid; place-items: center; }
    .tray button svg { width: 10px; height: 10px; }
    .tray time { margin-left: 8px; }
  `;

  private menu(items: Item[], cls: string): unknown {
    return html`<ul class="menu ${cls}" role="menu">
      ${items.map((it) =>
        it === null
          ? html`<li class="line" role="separator"></li>`
          : html`<li class=${it.on ? "on" : ""} role="none">
              <button class="item" role="menuitem">
                <span class="ic">${it.i ? icon(it.i, "i16") : nothing}</span>
                <span class="t">${label(it.t)}</span>
                ${it.k ? html`<span>${label(it.k)}</span>` : nothing}
                <span class="ar">${it.sub ? html`<i></i>` : nothing}</span>
              </button>
              ${it.on && it.sub ? this.menu(IMPORT_MENU, "import") : nothing}
              ${it.on && !it.sub ? this.tip() : nothing}
            </li>`
      )}
    </ul>`;
  }

  private tip() {
    return html`<div class="tip" role="tooltip">
      <svg aria-hidden="true">
        <path d="M9 23H266Q278 24 279 33Q278 45 266 46H12Z" fill="rgba(0,0,0,.45)" />
        <path d="M8 21H15L2 3L31 21H268Q276 21 276 29V36Q276 44 268 44H8Q1 44 1 36V29Q1 21 8 21Z" fill="#ffffe6" stroke="#000" stroke-width="1.500" />
        <ellipse cx="142" cy="34" rx="142" ry="15" fill="none" stroke="#e01824" />
      </svg>
      <p>${label("将 VRML 模型作为未参数化特征导入到工作部件。")}</p>
    </div>`;
  }

  private scene() {
    return html`<svg role="img" aria-label="模型视图">
      ${unsafeSVG(`<g transform="translate(-44 -184)">
        <path d="M525 325L512 505A71 27 5 0 0 651 522L665 337Z" fill="url(#side)" stroke="#2c3a44" stroke-width=".6"/>
        <ellipse cx="595" cy="331" rx="70.500" ry="27.500" transform="rotate(5 595 331)" fill="#a4d0e8" stroke="#141c24"/>
        <g fill="none" stroke="#8c855c" stroke-width="1.500">
          <path d="M682 446L671 481Q678 488 687 482ZM679 484L675 560M679 508L683 512L688 509"/>
          <path d="M692 501L701 497M708 493L714 490M693 513L701 517M714 490V519M708 520L717 522M711 523V553M724 525L732 528M731 553V590M742 564L750 567M745 584L752 580M726 588L736 593" stroke-dasharray="9 5"/>
          <circle cx="727" cy="544" r="7"/><path d="M722 537L748 533L733 549L731 533M712 552L722 547"/>
          <path d="M708 585L750 598M757 592Q746 597 750 607L785 610Z"/>
        </g>
        <path d="M773 408L759 594A71 27 5 0 0 900 604L914 419Z" fill="url(#side)"/>
        <path d="M759 594A71 27 5 0 0 900 604" fill="none" stroke="#4450d8" stroke-width="2"/>
        <ellipse cx="843.500" cy="413" rx="70.500" ry="27.500" transform="rotate(5 843.500 413)" fill="#a4d0e8" stroke="#141c24"/>
        <path d="M757 592L785 610L762 608M750 603Q752 608 762 608" fill="none" stroke="#b4b898" stroke-width="1.500"/>
        <g fill="#8c855c"><text x="682" y="441">Z</text><text x="751" y="531">Y</text></g>
        <text x="792" y="612" fill="#d8e0e4">X</text>
        <g fill="#e8945c"><text x="676" y="522">ZC</text><text x="718" y="587">XC</text></g>
        <path d="M708 553L718 547M709 556L716 558" stroke="#e88c40" stroke-width="1.500"/>
        <g fill="none" stroke-width="2"><path d="M120 658L122 623" stroke="#3c38c8"/><path d="M120 658L141 647" stroke="#18b880"/><path d="M120 658L152 669" stroke="#e03840"/></g>
        <circle cx="120" cy="658" r="4.500" fill="#a8a8a8"/>
        <text x="119" y="619" fill="#4440cc">Z</text><text x="144" y="650" fill="#18b880">Y</text><text x="158" y="676" fill="#e03840">X</text>
      </g>`)}
    </svg>`;
  }

  render() {
    const min = html`<svg viewBox="0 0 14 14"><path d="M3 11H9" stroke="currentColor" stroke-width="2.500" /></svg>`;
    const rest = html`<svg viewBox="0 0 14 14" fill="none" stroke="currentColor" stroke-width="1.500"><path d="M5 5V2H12V8H9M2 5.500H9V12H2Z" /></svg>`;
    const close = html`<svg viewBox="0 0 14 14"><path d="M2 2L12 12M12 2L2 12" stroke="currentColor" stroke-width="2.200" /></svg>`;
    return html`<div class="app">
      <svg class="defs" aria-hidden="true">
        <defs>
          <linearGradient id="sheet"><stop offset="0" stop-color="#c4d0ff" /><stop offset="1" stop-color="#6c88f4" /></linearGradient>
          <linearGradient id="fin" x2="0" y2="1"><stop offset="0" stop-color="#dcecff" /><stop offset="1" stop-color="#4c84ec" /></linearGradient>
          <linearGradient id="side"><stop offset="0" stop-color="#607c8a" /><stop offset=".25" stop-color="#546c79" /><stop offset=".6" stop-color="#607d8a" /><stop offset=".9" stop-color="#6a8b99" /><stop offset="1" stop-color="#5c7987" /></linearGradient>
          <linearGradient id="rainbow" x2="0" y2="1"><stop offset="0" stop-color="#f02010" /><stop offset=".35" stop-color="#f8f020" /><stop offset=".6" stop-color="#20e060" /><stop offset="1" stop-color="#1060ff" /></linearGradient>
        </defs>
      </svg>
      <header class="title">
        ${icon("nx", "i20")}
        <h1>${label("NX 7 - 建模 - [model3.prt （修改的） ]")}</h1>
        <span class="brand">SIEMENS</span>
        <div class="wins"><button aria-label="最小化">${min}</button><button aria-label="还原">${rest}</button><button class="x" aria-label="关闭">${close}</button></div>
      </header>
      <div class="menubar">
        <i class="grip"></i>
        ${icon("part", "i16")}
        <nav>
          <div class="anchor"><button class="top open">${label("文件(&F)")}</button>${this.menu(FILE_MENU, "file")}</div>
          ${MENUS.map((m) => html`<button class="top">${label(m)}</button>`)}
        </nav>
        <div class="subwins"><button aria-label="最小化窗口">${min}</button><button aria-label="还原窗口">${rest}</button><button aria-label="关闭窗口">${close}</button></div>
      </div>
      <div class="bars">
        <div class="row">${ROW1.map(group)}</div>
        <div class="row">${ROW2.map(group)}</div>
      </div>
      <div class="select">
        <select aria-label="选择过滤器"><option>没有选择过滤器</option></select>
        ${"lock asm | snap v undo wcs ghostA ghostB | rect v | blueBox".split(" ").map((t) =>
          ICONS[t] ? html`<button class="tool" aria-label=${t}>${icon(t, "i16")}</button>` : tool(t)
        )}
        ${tool("_")}
      </div>
      <div class="cue">
        <strong>选择对象并使用 MB3，或者双击某一对象</strong>
        <span class="wide"></span><span class="n1"></span><span class="n2"></span><span class="n3">${icon("full", "i16")}</span>
      </div>
      <div class="split">
        <div class="pager">
          <button aria-label="向左"><svg viewBox="0 0 12 14"><path d="M10 2L3 7L10 12" fill="none" stroke="#555" stroke-width="2.500" /></svg></button><i></i>
          <button aria-label="向右"><svg viewBox="0 0 12 14"><path d="M2 2L9 7L2 12" fill="none" stroke="#555" stroke-width="2.500" /></svg></button>
        </div>
      </div>
      <main class="main">
        <aside class="res">
          ${TABS.map((t) => html`<button class=${t === "navClock" ? "cur" : t === "navInfo" || t === "navWeb" ? "gap" : ""} aria-label=${t}>${icon(t)}</button>`)}
        </aside>
        <div class="edge"></div>
        <section class="canvas">
          ${this.scene()}
          <p class="memo">模型为未参数化</p>
        </section>
      </main>
      <div class="bottom">
        ${BOTTOM.map(group)}
        <div class="tail"><span>»</span><i class="tri"></i></div>
      </div>
      <footer class="task">
        <button class="start">${icon("flag", "i20")}<span>开始</span></button>
        <div class="quick">${icon("film", "i16")}${icon("swirl", "i16")}${icon("phone", "i16")}<b>»</b></div>
        <button class="win">${icon("ie", "i16")}<span>${label("求助 - 『Siemens...")}</span></button>
        <button class="win act">${icon("nx", "i16")}<span>${label("NX 7 - 建模 - [m...")}</span></button>
        <div class="tray">
          <button aria-label="显示隐藏的图标"><svg viewBox="0 0 10 10"><path d="M7 1L3 5L7 9" fill="none" stroke="#fff" stroke-width="2" /></svg></button>
          ${icon("tray", "i16")}${icon("pcs", "i16")}<time>${label("20:06")}</time>
        </div>
      </footer>
    </div>`;
  }
}
